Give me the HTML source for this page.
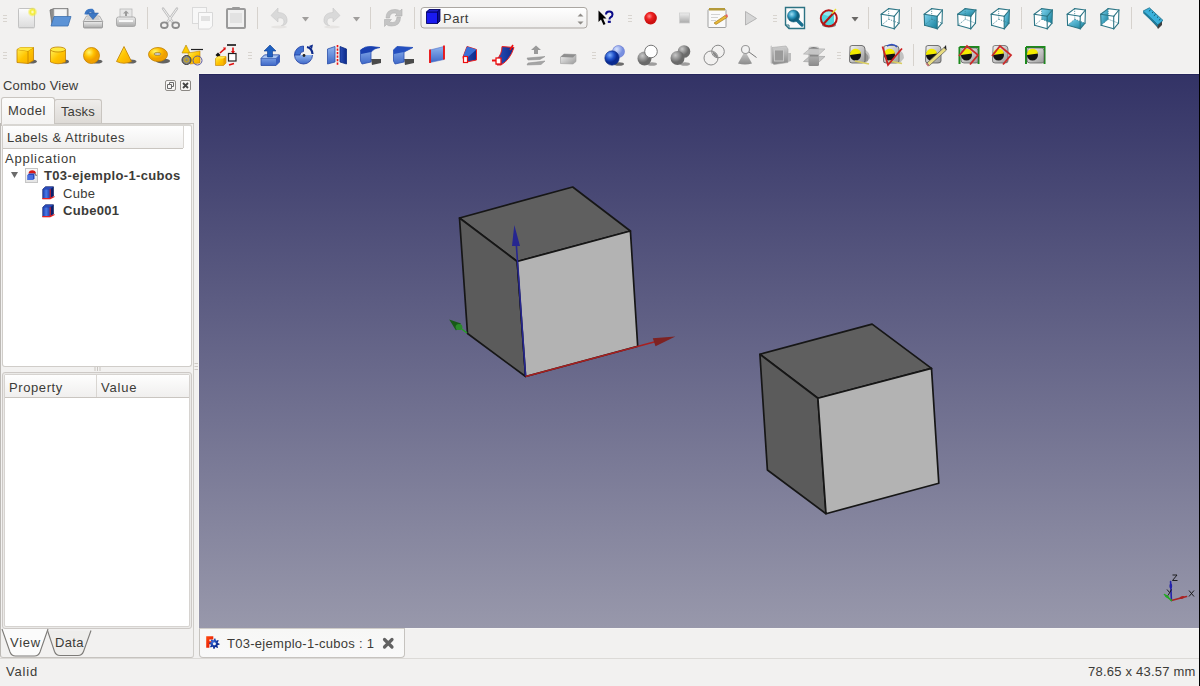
<!DOCTYPE html>
<html><head><meta charset="utf-8">
<style>
html,body{margin:0;padding:0;}
body{width:1200px;height:686px;overflow:hidden;position:relative;background:#f2f1f0;font-family:"Liberation Sans",sans-serif;font-size:13px;color:#3c3c3c;}
.a{position:absolute;}
.t{position:absolute;white-space:pre;line-height:15px;font-size:13px;color:#3c3b37;}
.b{font-weight:bold;}
#view{left:199px;top:74px;width:1000px;height:554px;background:linear-gradient(#333366,#9898ab);border-top:1px solid #26265c;box-sizing:border-box;}
#rb{left:1199px;top:0;width:1px;height:686px;background:#000;}
</style></head><body>


<!-- toolbar row 1 -->
<svg class="a" style="left:0;top:0" width="1200" height="36" viewBox="0 0 1200 36">
<defs>
<linearGradient id="gpage" x1="0" y1="0" x2="0" y2="1"><stop offset="0" stop-color="#fdfdfd"/><stop offset="1" stop-color="#dcdcdc"/></linearGradient>
<radialGradient id="gstar"><stop offset="0" stop-color="#ffffe0"/><stop offset="0.45" stop-color="#f4ec30"/><stop offset="1" stop-color="#f4ec30" stop-opacity="0"/></radialGradient>
<linearGradient id="ggray" x1="0" y1="0" x2="0" y2="1"><stop offset="0" stop-color="#eeeeee"/><stop offset="1" stop-color="#a9a9a9"/></linearGradient>
<radialGradient id="gred" cx="0.4" cy="0.35"><stop offset="0" stop-color="#ff8a8a"/><stop offset="0.5" stop-color="#ee2222"/><stop offset="1" stop-color="#cc1010"/></radialGradient>
<linearGradient id="gteal" x1="0" y1="0" x2="1" y2="1"><stop offset="0" stop-color="#7fd4f0"/><stop offset="1" stop-color="#137d98"/></linearGradient>
<radialGradient id="gmag" cx="0.35" cy="0.35"><stop offset="0" stop-color="#9fe0f5"/><stop offset="0.6" stop-color="#2b95bd"/><stop offset="1" stop-color="#10607f"/></radialGradient>
<linearGradient id="gcombo" x1="0" y1="0" x2="0" y2="1"><stop offset="0" stop-color="#ffffff"/><stop offset="1" stop-color="#efeeed"/></linearGradient>
</defs>
<g fill="none" stroke="#d8d4cf" stroke-width="1">
 <path d="M3,15.5H7M3,18.5H7M3,21.5H7"/>
 <path d="M3,52.5H7M3,55.5H7M3,58.5H7"/>
 <path d="M628,15.5H632M628,18.5H632M628,21.5H632"/>
 <path d="M773,15.5H777M773,18.5H777M773,21.5H777"/>
</g>
<g stroke="#d6d2cd" stroke-width="1">
 <path d="M147.5,7V29M257.5,7V29M370.5,7V29M414.5,7V29M868.5,7V29M911.5,7V29M1021.5,7V29M1131.5,7V29"/>
</g>
<!-- new -->
<rect x="18.5" y="9" width="16" height="19.5" rx="0.8" fill="#b8b8b8" opacity="0.6"/>
<rect x="18.5" y="8.5" width="16" height="19" rx="0.8" fill="url(#gpage)" stroke="#c2c2c2"/>
<circle cx="32.5" cy="12" r="5" fill="url(#gstar)"/>
<!-- open -->
<path d="M50,10 L54,8.5 L68,8.5 L68,16 L52,25 Z" fill="#8d8d8d" stroke="#6f6f6f" stroke-width="0.8"/>
<rect x="54" y="9" width="13" height="9" fill="#f4f4f4" stroke="#b8b8b8" stroke-width="0.6"/>
<path d="M54,16.5 L71,16.5 L68,26 L51,26 Z" fill="#5c93d6" stroke="#3a6eb0" stroke-width="0.8"/>
<!-- save -->
<path d="M86.5,16 L99.5,16 L103,22 L83,22 Z" fill="#e4e4e4" stroke="#a0a0a0" stroke-width="0.8"/>
<path d="M88,16 L98,16 L100,20 L86,20Z" fill="#cfcfcf"/>
<rect x="83.5" y="21.5" width="19" height="6.5" rx="1" fill="url(#ggray)" stroke="#8e8e8e" stroke-width="0.8"/>
<path d="M86,14.5 Q87,10 92,10.5 Q93,11 93,13" fill="none" stroke="#3c77c4" stroke-width="3.4"/>
<path d="M87.5,13 L98.5,13 L93,19.5Z" fill="#3c77c4" stroke="#2a5a9a" stroke-width="0.5"/>
<!-- print -->
<rect x="120" y="9" width="12" height="9" fill="#e6e6e6" stroke="#b8b8b8" stroke-width="0.8"/>
<path d="M126,10.5 L129,13.5 L127,13.5 L127,16 L125,16 L125,13.5 L123,13.5Z" fill="#9a9a9a"/>
<rect x="116.5" y="17" width="19" height="9.5" rx="2" fill="url(#ggray)" stroke="#a0a0a0" stroke-width="0.8"/>
<rect x="119" y="20" width="14" height="2" fill="#f8f8f8"/>
<!-- cut -->
<path d="M163,8.5 L172.5,22 M177,8.5 L167.5,22" stroke="#bdbdbd" stroke-width="2.4" stroke-linecap="round"/>
<path d="M163,8.5 L172.5,22 M177,8.5 L167.5,22" stroke="#f0f0f0" stroke-width="1"/>
<ellipse cx="164.3" cy="25.2" rx="3.4" ry="2.8" fill="none" stroke="#8c8c8c" stroke-width="1.8"/>
<ellipse cx="175.7" cy="25.2" rx="3.4" ry="2.8" fill="none" stroke="#8c8c8c" stroke-width="1.8"/>
<!-- copy -->
<rect x="192.5" y="7.5" width="14" height="16" fill="#f7f7f7" stroke="#dadada"/>
<path d="M198.5,12.5 H212.5 V26 L209.5,29 H198.5 Z" fill="#f9f9f9" stroke="#d8d8d8"/>
<rect x="201" y="16" width="9" height="5" fill="#e2e2e2"/>
<!-- paste -->
<rect x="227" y="9" width="18" height="19" rx="1" fill="#f0f0f0" stroke="#9a9a9a" stroke-width="2"/>
<rect x="232" y="7" width="8" height="3" rx="1" fill="#9a9a9a"/>
<rect x="230" y="13" width="12" height="10" fill="#e2e2e2"/>
<!-- undo -->
<path d="M278,8 L271,15.5 L278,22 L278,18 Q284,17 284,22 Q284,25 281,26 Q288,25 287,19 Q286,12.5 278,12.5Z" fill="#d9d9d9" stroke="#c8c8c8" stroke-width="0.6"/>
<ellipse cx="279" cy="27" rx="8" ry="1.5" fill="#e6e4e2"/>
<path d="M302,17 L309,17 L305.5,21.5Z" fill="#a09e9c"/>
<!-- redo -->
<path d="M333,8 L340,15.5 L333,22 L333,18 Q327,17 327,22 Q327,25 330,26 Q323,25 324,19 Q325,12.5 333,12.5Z" fill="#d9d9d9" stroke="#c8c8c8" stroke-width="0.6"/>
<ellipse cx="332" cy="27" rx="8" ry="1.5" fill="#e6e4e2"/>
<path d="M353,17 L360,17 L356.5,21.5Z" fill="#a09e9c"/>
<!-- refresh -->
<path d="M386,18 Q386,9.5 395,9.5 Q398.5,9.5 400,11 L402,9 L402,16 L395,16 L397,14 Q396,13 394,13 Q390,13 389.5,18Z" fill="#c4c4c4" stroke="#b0b0b0" stroke-width="0.6"/>
<path d="M400.5,17 Q400.5,26 391.5,26 Q388,26 386.5,24.5 L384.5,26.5 L384.5,19.5 L391.5,19.5 L389.5,21.5 Q390.5,22.5 392.5,22.5 Q396.5,22.5 397,17Z" fill="#c4c4c4" stroke="#b0b0b0" stroke-width="0.6"/>
<!-- combo box -->
<rect x="421" y="7.5" width="166" height="20.5" rx="3" fill="url(#gcombo)" stroke="#aba7a2" stroke-width="1"/>
<path d="M426.5,12 L429,9.5 L440,9.5 L440,21 L437.5,23.5 L426.5,23.5Z" fill="#0a0a8a"/>
<path d="M426.5,12 L437.5,12 L437.5,23.5 L426.5,23.5Z" fill="#1a1af0" stroke="#000060" stroke-width="0.8"/>
<path d="M426.5,12 L429,9.5 L440,9.5 L437.5,12Z" fill="#2020c8" stroke="#000060" stroke-width="0.8"/>
<path d="M437.5,12 L440,9.5 L440,21 L437.5,23.5Z" fill="#101090" stroke="#000060" stroke-width="0.8"/>
<path d="M577.5,16.5 L580.5,13.5 L583.5,16.5Z M577.5,21.5 L583.5,21.5 L580.5,24.5Z" fill="#8e8b87"/>
<!-- whats this -->
<path d="M598.5,10.5 L598.5,22 L601,19.5 L603.5,25 L605.5,24 L603,18.5 L606.5,18.5Z" fill="#000"/>
<path d="M606,14.5 Q606,11.5 609.3,11.5 Q612.5,11.5 612.5,14.5 Q612.5,16.5 610.3,17.5 Q609.5,18 609.5,19.5" fill="none" stroke="#0a0a88" stroke-width="2"/><rect x="607.8" y="20.7" width="3" height="2.2" fill="#0a0a88"/>
<!-- record -->
<circle cx="650.6" cy="18.1" r="6.3" fill="url(#gred)"/>
<!-- stop -->
<rect x="679.5" y="13" width="10" height="10" fill="url(#ggray)" stroke="#cfcfcf" stroke-width="0.8"/>
<!-- macro editor -->
<rect x="708" y="9.5" width="18" height="18" rx="1" fill="#fafafa" stroke="#a0a0a0" stroke-width="1"/>
<rect x="709" y="8" width="16" height="2.5" fill="#b49a3a"/>
<path d="M711,14.5H720M711,17.5H718M711,20.5H716" stroke="#c8c8c8" stroke-width="0.8"/>
<path d="M714,23 L725,15.5 L727,17.5 L716,24.5 Z" fill="#e8b838" stroke="#9a7010" stroke-width="0.6"/>
<path d="M725,15.5 L727,14 L728,16.5 L727,17.5Z" fill="#e86060"/>
<!-- play -->
<path d="M745.5,11.5 L756.5,18.5 L745.5,25 Z" fill="#d6d6d6" stroke="#a8a8a8" stroke-width="0.8"/>
<!-- zoom fit -->
<path d="M785.5,7.5 H804.5 V28.5 H789 L785.5,25 Z" fill="#fbfbfb" stroke="#2c7383" stroke-width="1.4"/>
<path d="M785.5,25 L789,25 L789,28.5" fill="none" stroke="#2c7383" stroke-width="1"/>
<path d="M797,20 L802,25" stroke="#1a6f8f" stroke-width="3.2" stroke-linecap="round"/>
<circle cx="793.5" cy="16" r="6" fill="url(#gmag)" stroke="#145f7a" stroke-width="0.6"/>
<!-- draw style -->
<ellipse cx="829" cy="25" rx="7" ry="2.5" fill="#333" opacity="0.6"/>
<path d="M822,14 L828,11 L834,13 L834,24 L828,27 L822,24Z" fill="#50d4dc"/>
<path d="M822,14 L828,11 L834,13 L828,16Z" fill="#8ee8ee"/>
<circle cx="828.8" cy="18.3" r="8" fill="none" stroke="#b31515" stroke-width="2"/>
<path d="M823.5,24 L834,12.5" stroke="#b31515" stroke-width="2"/>
<path d="M832,13.5 L836,9" stroke="#e8e030" stroke-width="1.4"/>
<path d="M851.5,17 L858.5,17 L855,21.5Z" fill="#6a6866"/>
</svg>

<svg class="a" style="left:0;top:0" width="1200" height="36" viewBox="0 0 1200 36">
<defs><linearGradient id="gteal2" x1="0" y1="0" x2="1" y2="1"><stop offset="0" stop-color="#7fd4f0"/><stop offset="1" stop-color="#137d98"/></linearGradient></defs>
<polygon points="881.2,14.2 888.6,8.6 899.4,10.0 899.0,23.2 894.2,28.8 881.6,25.2" fill="#ffffff"/>
<line x1="888.6" y1="8.6" x2="888.8" y2="19.2" stroke="#3d8393" stroke-width="0.8" stroke-dasharray="1.2,1"/>
<line x1="888.8" y1="19.2" x2="881.6" y2="25.2" stroke="#3d8393" stroke-width="0.8" stroke-dasharray="1.2,1"/>
<line x1="888.8" y1="19.2" x2="899.0" y2="23.2" stroke="#3d8393" stroke-width="0.8" stroke-dasharray="1.2,1"/>
<line x1="881.2" y1="14.2" x2="888.6" y2="8.6" stroke="#2d7686" stroke-width="1.1" stroke-linecap="round"/>
<line x1="888.6" y1="8.6" x2="899.4" y2="10.0" stroke="#2d7686" stroke-width="1.1" stroke-linecap="round"/>
<line x1="899.4" y1="10.0" x2="894.2" y2="16.3" stroke="#2d7686" stroke-width="1.1" stroke-linecap="round"/>
<line x1="894.2" y1="16.3" x2="881.2" y2="14.2" stroke="#2d7686" stroke-width="1.1" stroke-linecap="round"/>
<line x1="881.2" y1="14.2" x2="881.6" y2="25.2" stroke="#2d7686" stroke-width="1.1" stroke-linecap="round"/>
<line x1="881.6" y1="25.2" x2="894.2" y2="28.8" stroke="#2d7686" stroke-width="1.1" stroke-linecap="round"/>
<line x1="894.2" y1="28.8" x2="894.2" y2="16.3" stroke="#2d7686" stroke-width="1.1" stroke-linecap="round"/>
<line x1="899.4" y1="10.0" x2="899.0" y2="23.2" stroke="#2d7686" stroke-width="1.1" stroke-linecap="round"/>
<line x1="899.0" y1="23.2" x2="894.2" y2="28.8" stroke="#2d7686" stroke-width="1.1" stroke-linecap="round"/>
<polygon points="924.2,14.2 931.6,8.6 942.4,10.0 942.0,23.2 937.2,28.8 924.6,25.2" fill="#ffffff"/>
<polygon points="924.2,14.2 937.2,16.3 937.2,28.8 924.6,25.2" fill="url(#gteal2)"/>
<line x1="931.6" y1="8.6" x2="931.8" y2="19.2" stroke="#3d8393" stroke-width="0.8" stroke-dasharray="1.2,1"/>
<line x1="931.8" y1="19.2" x2="924.6" y2="25.2" stroke="#3d8393" stroke-width="0.8" stroke-dasharray="1.2,1"/>
<line x1="931.8" y1="19.2" x2="942.0" y2="23.2" stroke="#3d8393" stroke-width="0.8" stroke-dasharray="1.2,1"/>
<line x1="924.2" y1="14.2" x2="931.6" y2="8.6" stroke="#2d7686" stroke-width="1.1" stroke-linecap="round"/>
<line x1="931.6" y1="8.6" x2="942.4" y2="10.0" stroke="#2d7686" stroke-width="1.1" stroke-linecap="round"/>
<line x1="942.4" y1="10.0" x2="937.2" y2="16.3" stroke="#2d7686" stroke-width="1.1" stroke-linecap="round"/>
<line x1="937.2" y1="16.3" x2="924.2" y2="14.2" stroke="#2d7686" stroke-width="1.1" stroke-linecap="round"/>
<line x1="924.2" y1="14.2" x2="924.6" y2="25.2" stroke="#2d7686" stroke-width="1.1" stroke-linecap="round"/>
<line x1="924.6" y1="25.2" x2="937.2" y2="28.8" stroke="#2d7686" stroke-width="1.1" stroke-linecap="round"/>
<line x1="937.2" y1="28.8" x2="937.2" y2="16.3" stroke="#2d7686" stroke-width="1.1" stroke-linecap="round"/>
<line x1="942.4" y1="10.0" x2="942.0" y2="23.2" stroke="#2d7686" stroke-width="1.1" stroke-linecap="round"/>
<line x1="942.0" y1="23.2" x2="937.2" y2="28.8" stroke="#2d7686" stroke-width="1.1" stroke-linecap="round"/>
<polygon points="957.7,14.2 965.1,8.6 975.9,10.0 975.5,23.2 970.7,28.8 958.1,25.2" fill="#ffffff"/>
<polygon points="957.7,14.2 965.1,8.6 975.9,10.0 970.7,16.3" fill="url(#gteal2)"/>
<line x1="965.1" y1="8.6" x2="965.3" y2="19.2" stroke="#3d8393" stroke-width="0.8" stroke-dasharray="1.2,1"/>
<line x1="965.3" y1="19.2" x2="958.1" y2="25.2" stroke="#3d8393" stroke-width="0.8" stroke-dasharray="1.2,1"/>
<line x1="965.3" y1="19.2" x2="975.5" y2="23.2" stroke="#3d8393" stroke-width="0.8" stroke-dasharray="1.2,1"/>
<line x1="957.7" y1="14.2" x2="965.1" y2="8.6" stroke="#2d7686" stroke-width="1.1" stroke-linecap="round"/>
<line x1="965.1" y1="8.6" x2="975.9" y2="10.0" stroke="#2d7686" stroke-width="1.1" stroke-linecap="round"/>
<line x1="975.9" y1="10.0" x2="970.7" y2="16.3" stroke="#2d7686" stroke-width="1.1" stroke-linecap="round"/>
<line x1="970.7" y1="16.3" x2="957.7" y2="14.2" stroke="#2d7686" stroke-width="1.1" stroke-linecap="round"/>
<line x1="957.7" y1="14.2" x2="958.1" y2="25.2" stroke="#2d7686" stroke-width="1.1" stroke-linecap="round"/>
<line x1="958.1" y1="25.2" x2="970.7" y2="28.8" stroke="#2d7686" stroke-width="1.1" stroke-linecap="round"/>
<line x1="970.7" y1="28.8" x2="970.7" y2="16.3" stroke="#2d7686" stroke-width="1.1" stroke-linecap="round"/>
<line x1="975.9" y1="10.0" x2="975.5" y2="23.2" stroke="#2d7686" stroke-width="1.1" stroke-linecap="round"/>
<line x1="975.5" y1="23.2" x2="970.7" y2="28.8" stroke="#2d7686" stroke-width="1.1" stroke-linecap="round"/>
<polygon points="991.2,14.2 998.6,8.6 1009.4,10.0 1009.0,23.2 1004.2,28.8 991.6,25.2" fill="#ffffff"/>
<polygon points="1004.2,16.3 1009.4,10.0 1009.0,23.2 1004.2,28.8" fill="url(#gteal2)"/>
<line x1="998.6" y1="8.6" x2="998.8" y2="19.2" stroke="#3d8393" stroke-width="0.8" stroke-dasharray="1.2,1"/>
<line x1="998.8" y1="19.2" x2="991.6" y2="25.2" stroke="#3d8393" stroke-width="0.8" stroke-dasharray="1.2,1"/>
<line x1="998.8" y1="19.2" x2="1009.0" y2="23.2" stroke="#3d8393" stroke-width="0.8" stroke-dasharray="1.2,1"/>
<line x1="991.2" y1="14.2" x2="998.6" y2="8.6" stroke="#2d7686" stroke-width="1.1" stroke-linecap="round"/>
<line x1="998.6" y1="8.6" x2="1009.4" y2="10.0" stroke="#2d7686" stroke-width="1.1" stroke-linecap="round"/>
<line x1="1009.4" y1="10.0" x2="1004.2" y2="16.3" stroke="#2d7686" stroke-width="1.1" stroke-linecap="round"/>
<line x1="1004.2" y1="16.3" x2="991.2" y2="14.2" stroke="#2d7686" stroke-width="1.1" stroke-linecap="round"/>
<line x1="991.2" y1="14.2" x2="991.6" y2="25.2" stroke="#2d7686" stroke-width="1.1" stroke-linecap="round"/>
<line x1="991.6" y1="25.2" x2="1004.2" y2="28.8" stroke="#2d7686" stroke-width="1.1" stroke-linecap="round"/>
<line x1="1004.2" y1="28.8" x2="1004.2" y2="16.3" stroke="#2d7686" stroke-width="1.1" stroke-linecap="round"/>
<line x1="1009.4" y1="10.0" x2="1009.0" y2="23.2" stroke="#2d7686" stroke-width="1.1" stroke-linecap="round"/>
<line x1="1009.0" y1="23.2" x2="1004.2" y2="28.8" stroke="#2d7686" stroke-width="1.1" stroke-linecap="round"/>
<polygon points="1034.2,14.2 1041.6,8.6 1052.4,10.0 1052.0,23.2 1047.2,28.8 1034.6,25.2" fill="#ffffff"/>
<polygon points="1041.6,8.6 1052.4,10.0 1052.0,23.2 1041.8,19.2" fill="url(#gteal2)"/>
<line x1="1041.6" y1="8.6" x2="1041.8" y2="19.2" stroke="#3d8393" stroke-width="0.8" stroke-dasharray="1.2,1"/>
<line x1="1041.8" y1="19.2" x2="1034.6" y2="25.2" stroke="#3d8393" stroke-width="0.8" stroke-dasharray="1.2,1"/>
<line x1="1041.8" y1="19.2" x2="1052.0" y2="23.2" stroke="#3d8393" stroke-width="0.8" stroke-dasharray="1.2,1"/>
<line x1="1034.2" y1="14.2" x2="1041.6" y2="8.6" stroke="#2d7686" stroke-width="1.1" stroke-linecap="round"/>
<line x1="1041.6" y1="8.6" x2="1052.4" y2="10.0" stroke="#2d7686" stroke-width="1.1" stroke-linecap="round"/>
<line x1="1052.4" y1="10.0" x2="1047.2" y2="16.3" stroke="#2d7686" stroke-width="1.1" stroke-linecap="round"/>
<line x1="1047.2" y1="16.3" x2="1034.2" y2="14.2" stroke="#2d7686" stroke-width="1.1" stroke-linecap="round"/>
<line x1="1034.2" y1="14.2" x2="1034.6" y2="25.2" stroke="#2d7686" stroke-width="1.1" stroke-linecap="round"/>
<line x1="1034.6" y1="25.2" x2="1047.2" y2="28.8" stroke="#2d7686" stroke-width="1.1" stroke-linecap="round"/>
<line x1="1047.2" y1="28.8" x2="1047.2" y2="16.3" stroke="#2d7686" stroke-width="1.1" stroke-linecap="round"/>
<line x1="1052.4" y1="10.0" x2="1052.0" y2="23.2" stroke="#2d7686" stroke-width="1.1" stroke-linecap="round"/>
<line x1="1052.0" y1="23.2" x2="1047.2" y2="28.8" stroke="#2d7686" stroke-width="1.1" stroke-linecap="round"/>
<polygon points="1067.2,14.2 1074.6,8.6 1085.4,10.0 1085.0,23.2 1080.2,28.8 1067.6,25.2" fill="#ffffff"/>
<polygon points="1067.6,25.2 1080.2,28.8 1085.0,23.2 1074.8,19.2" fill="url(#gteal2)"/>
<line x1="1074.6" y1="8.6" x2="1074.8" y2="19.2" stroke="#3d8393" stroke-width="0.8" stroke-dasharray="1.2,1"/>
<line x1="1074.8" y1="19.2" x2="1067.6" y2="25.2" stroke="#3d8393" stroke-width="0.8" stroke-dasharray="1.2,1"/>
<line x1="1074.8" y1="19.2" x2="1085.0" y2="23.2" stroke="#3d8393" stroke-width="0.8" stroke-dasharray="1.2,1"/>
<line x1="1067.2" y1="14.2" x2="1074.6" y2="8.6" stroke="#2d7686" stroke-width="1.1" stroke-linecap="round"/>
<line x1="1074.6" y1="8.6" x2="1085.4" y2="10.0" stroke="#2d7686" stroke-width="1.1" stroke-linecap="round"/>
<line x1="1085.4" y1="10.0" x2="1080.2" y2="16.3" stroke="#2d7686" stroke-width="1.1" stroke-linecap="round"/>
<line x1="1080.2" y1="16.3" x2="1067.2" y2="14.2" stroke="#2d7686" stroke-width="1.1" stroke-linecap="round"/>
<line x1="1067.2" y1="14.2" x2="1067.6" y2="25.2" stroke="#2d7686" stroke-width="1.1" stroke-linecap="round"/>
<line x1="1067.6" y1="25.2" x2="1080.2" y2="28.8" stroke="#2d7686" stroke-width="1.1" stroke-linecap="round"/>
<line x1="1080.2" y1="28.8" x2="1080.2" y2="16.3" stroke="#2d7686" stroke-width="1.1" stroke-linecap="round"/>
<line x1="1085.4" y1="10.0" x2="1085.0" y2="23.2" stroke="#2d7686" stroke-width="1.1" stroke-linecap="round"/>
<line x1="1085.0" y1="23.2" x2="1080.2" y2="28.8" stroke="#2d7686" stroke-width="1.1" stroke-linecap="round"/>
<polygon points="1100.7,14.2 1108.1,8.6 1118.9,10.0 1118.5,23.2 1113.7,28.8 1101.1,25.2" fill="#ffffff"/>
<polygon points="1100.7,14.2 1108.1,8.6 1108.3,19.2 1101.1,25.2" fill="url(#gteal2)"/>
<line x1="1108.1" y1="8.6" x2="1108.3" y2="19.2" stroke="#3d8393" stroke-width="0.8" stroke-dasharray="1.2,1"/>
<line x1="1108.3" y1="19.2" x2="1101.1" y2="25.2" stroke="#3d8393" stroke-width="0.8" stroke-dasharray="1.2,1"/>
<line x1="1108.3" y1="19.2" x2="1118.5" y2="23.2" stroke="#3d8393" stroke-width="0.8" stroke-dasharray="1.2,1"/>
<line x1="1100.7" y1="14.2" x2="1108.1" y2="8.6" stroke="#2d7686" stroke-width="1.1" stroke-linecap="round"/>
<line x1="1108.1" y1="8.6" x2="1118.9" y2="10.0" stroke="#2d7686" stroke-width="1.1" stroke-linecap="round"/>
<line x1="1118.9" y1="10.0" x2="1113.7" y2="16.3" stroke="#2d7686" stroke-width="1.1" stroke-linecap="round"/>
<line x1="1113.7" y1="16.3" x2="1100.7" y2="14.2" stroke="#2d7686" stroke-width="1.1" stroke-linecap="round"/>
<line x1="1100.7" y1="14.2" x2="1101.1" y2="25.2" stroke="#2d7686" stroke-width="1.1" stroke-linecap="round"/>
<line x1="1101.1" y1="25.2" x2="1113.7" y2="28.8" stroke="#2d7686" stroke-width="1.1" stroke-linecap="round"/>
<line x1="1113.7" y1="28.8" x2="1113.7" y2="16.3" stroke="#2d7686" stroke-width="1.1" stroke-linecap="round"/>
<line x1="1118.9" y1="10.0" x2="1118.5" y2="23.2" stroke="#2d7686" stroke-width="1.1" stroke-linecap="round"/>
<line x1="1118.5" y1="23.2" x2="1113.7" y2="28.8" stroke="#2d7686" stroke-width="1.1" stroke-linecap="round"/>
<path d="M1143.5,12 L1157,27 L1158,29 L1162,25 L1162,21 Z" fill="#2e2e2e" opacity="0.9"/>
<path d="M1143.2,11 L1149.4,7.8 L1163,20.4 L1157.8,24.8 Z" fill="#3ab0da" stroke="#1d6f8a" stroke-width="0.8"/>
<path d="M1143.2,11 L1157.8,24.8 L1157.8,27 L1143.2,13.2Z" fill="#1f7f9f"/>
<path d="M1150.5,10 l-1.6,1.2 M1153,12.2 l-1,0.8 M1155.5,14.5 l-1.6,1.2 M1158,16.8 l-1,0.8 M1160.5,19 l-1.6,1.2" stroke="#0d4a5e" stroke-width="0.9"/>
</svg>
<!-- toolbar row 2 -->
<svg class="a" style="left:0;top:36px" width="1200" height="38" viewBox="0 36 1200 38">
<defs>
<linearGradient id="gy" x1="0" y1="0" x2="1" y2="1"><stop offset="0" stop-color="#fff25a"/><stop offset="0.5" stop-color="#ffc400"/><stop offset="1" stop-color="#f5a800"/></linearGradient>
<radialGradient id="gys" cx="0.35" cy="0.3"><stop offset="0" stop-color="#fff870"/><stop offset="0.6" stop-color="#ffc000"/><stop offset="1" stop-color="#f0a000"/></radialGradient>
<linearGradient id="gb" x1="0" y1="0" x2="0" y2="1"><stop offset="0" stop-color="#8fb4ee"/><stop offset="1" stop-color="#3f68c8"/></linearGradient>
<linearGradient id="gbd" x1="0" y1="0" x2="1" y2="0"><stop offset="0" stop-color="#2a4fb8"/><stop offset="1" stop-color="#0d2a8a"/></linearGradient>
<radialGradient id="gbs" cx="0.35" cy="0.3"><stop offset="0" stop-color="#7fb0ff"/><stop offset="0.6" stop-color="#1f50c8"/><stop offset="1" stop-color="#0a2a90"/></radialGradient>
<radialGradient id="gbs2" cx="0.35" cy="0.3"><stop offset="0" stop-color="#d8e4ff"/><stop offset="1" stop-color="#7890e0"/></radialGradient>
<radialGradient id="ggs" cx="0.35" cy="0.3"><stop offset="0" stop-color="#c8c8c8"/><stop offset="1" stop-color="#6a6a6a"/></radialGradient>
<linearGradient id="gg" x1="0" y1="0" x2="0" y2="1"><stop offset="0" stop-color="#cfcfcf"/><stop offset="1" stop-color="#8a8a8a"/></linearGradient>
<linearGradient id="gsilver" x1="0" y1="0" x2="1" y2="1"><stop offset="0" stop-color="#f4f4f4"/><stop offset="1" stop-color="#9a9a9a"/></linearGradient>
</defs>
<g fill="none" stroke="#d8d4cf" stroke-width="1">
 <path d="M3,52.5H7M3,55.5H7M3,58.5H7"/>
 <path d="M248,52.5H252M248,55.5H252M248,58.5H252"/>
 <path d="M592,52.5H596M592,55.5H596M592,58.5H596"/>
 <path d="M837,52.5H841M837,55.5H841M837,58.5H841"/>
</g>
<path d="M913.5,44V66" stroke="#d6d2cd"/>
<!-- box -->
<ellipse cx="31" cy="61.5" rx="6" ry="2" fill="#333" opacity="0.75"/>
<path d="M17,49.5 L20.5,47.5 L33.5,47.5 L33.5,60.5 L28,63.5 L17,62.5 Z" fill="url(#gy)" stroke="#c08000" stroke-width="0.8"/>
<path d="M17,49.5 L28,51 L28,63.5 M28,51 L33.5,47.5" fill="none" stroke="#c08000" stroke-width="0.8"/>
<path d="M17,49.5 L20.5,47.5 L33.5,47.5 L28,51Z" fill="#ffe840"/>
<!-- cylinder -->
<ellipse cx="64" cy="61.5" rx="5" ry="2" fill="#333" opacity="0.75"/>
<path d="M50.5,49.5 L50.5,62 Q58,65.5 65.5,62 L65.5,49.5" fill="url(#gy)" stroke="#c08000" stroke-width="0.8"/>
<ellipse cx="58" cy="49.5" rx="7.5" ry="2.5" fill="#ffea40" stroke="#c08000" stroke-width="0.8"/>
<!-- sphere -->
<ellipse cx="97" cy="61.5" rx="5.5" ry="2" fill="#333" opacity="0.75"/>
<circle cx="91.5" cy="55.5" r="8" fill="url(#gys)" stroke="#c08000" stroke-width="0.8"/>
<!-- cone -->
<ellipse cx="131" cy="61.5" rx="5.5" ry="2" fill="#333" opacity="0.75"/>
<path d="M124,46.5 L131.5,61.5 Q124,65 116.5,61.5Z" fill="url(#gy)" stroke="#c08000" stroke-width="0.8"/>
<!-- torus -->
<ellipse cx="163" cy="61" rx="7" ry="2.5" fill="#333" opacity="0.75"/>
<ellipse cx="158" cy="54.5" rx="9.5" ry="7" fill="url(#gys)" stroke="#c08000" stroke-width="0.8"/>
<ellipse cx="157.5" cy="54" rx="3.5" ry="1.5" fill="#c8c8c8" stroke="#9a7000" stroke-width="0.6"/>
<!-- primitives -->
<path d="M186,45 L190,53 L182,53Z" fill="#ffcc00" stroke="#b08000" stroke-width="0.6"/>
<path d="M191,49.5 H203" stroke="#222" stroke-width="1.2"/>
<path d="M188,53 L200,51 L200,63 L190,64 Z" fill="url(#gy)" stroke="#c08000" stroke-width="0.6"/>
<circle cx="186.5" cy="60" r="4.5" fill="#888" stroke="#333" stroke-width="1"/>
<circle cx="186.5" cy="60" r="2" fill="none" stroke="#d8b000" stroke-width="1"/>
<circle cx="197.5" cy="60.5" r="4.5" fill="none" stroke="#5a5aa0" stroke-width="1"/>
<!-- shape builder -->
<path d="M215.5,55 L218,52.5 L220.5,55 L218,57.5Z" fill="#111"/>
<path d="M220,53 L225,48.5" stroke="#e01010" stroke-width="1.6"/><path d="M223,47.5 L226,47.5 L225,50.5Z" fill="#e01010"/>
<path d="M227,45 H236" stroke="#111" stroke-width="1.6"/>
<path d="M233,47.5 V52" stroke="#e01010" stroke-width="1.6"/><path d="M231,51 L235,51 L233,54Z" fill="#e01010"/>
<rect x="228.5" y="53.5" width="7.5" height="7.5" fill="#fff" stroke="#222" stroke-width="1.2"/>
<path d="M234,63.5 L229,65" stroke="#e01010" stroke-width="1.6"/>
<path d="M215.5,58.5 L218,56.5 L226,56.5 L226,63 L223.5,65.5 L215.5,65.5Z" fill="url(#gy)" stroke="#c08000" stroke-width="0.6"/><path d="M215.5,58.5 L218,56.5 L226,56.5 L223.5,58.5Z" fill="#ffe850"/><path d="M223.5,58.5 L226,56.5 L226,63 L223.5,65.5Z" fill="#e8a000"/>
<!-- extrude -->
<path d="M261,58.5 L264.5,55 L279.5,55 L279.5,62 L276,65.5 L261,65.5Z" fill="url(#gb)" stroke="#2a4fa8" stroke-width="0.8"/>
<path d="M261,58.5 L264.5,55 L279.5,55 L276,58.5Z" fill="#a8c4f0" stroke="#2a4fa8" stroke-width="0.6"/>
<path d="M276,58.5 L279.5,55 L279.5,62 L276,65.5Z" fill="#3a60c0"/>
<path d="M270,45 L276,51 L272.5,51 L272.5,57 L267.5,57 L267.5,51 L264,51Z" fill="#1f60c0" stroke="#0a3a90" stroke-width="0.6"/>
<!-- revolve -->
<path d="M303.5,55 m-9,0 a9,9 0 1,0 18,0" fill="url(#gb)" stroke="#1a3aa0" stroke-width="0.8"/>
<path d="M303.5,46 A9,9 0 0,0 294.5,55 L300,55 A3.5,3.5 0 0,1 303.5,51.5Z" fill="#3f6fd0" stroke="#1a3aa0" stroke-width="0.8"/>
<circle cx="304" cy="55.5" r="1.4" fill="#222"/>
<path d="M307,47 Q312,48 312.5,54" fill="none" stroke="#0d2a8a" stroke-width="2.2"/>
<path d="M309,46 L313,44.5 L312,49Z" fill="#0d2a8a"/>
<!-- mirror -->
<path d="M327.5,49 L335,46.5 L335,62 L327.5,64Z" fill="url(#gb)" stroke="#2a4fa8" stroke-width="0.8"/>
<path d="M340,46.5 L346.5,49 L346.5,64 L340,62Z" fill="url(#gbd)" stroke="#0a2a80" stroke-width="0.8"/>
<path d="M337.5,45 V66" stroke="#ee1010" stroke-width="1.6" stroke-dasharray="2.2,1.3"/>
<!-- fillet -->
<path d="M371,59 L381,59 L381,63 L372,65Z" fill="#4a4a4a"/>
<path d="M360.5,50 Q365,46 371,46.5 L380,47.5 Q374,48 371,52 L371,62 L362,64 L360.5,61Z" fill="url(#gb)" stroke="#2a4fb0" stroke-width="0.8"/>
<path d="M360.5,50 Q365,46 371,46.5 L380,47.5 Q374,48 371,52 L361,54Z" fill="#1a40b0"/>
<!-- chamfer -->
<path d="M404,59 L414,59 L414,63 L405,65Z" fill="#4a4a4a"/>
<path d="M393.5,50 L397,46.5 L413,47.5 L404,52 L404,62 L395,64 L393.5,61Z" fill="url(#gb)" stroke="#2a4fb0" stroke-width="0.8"/>
<path d="M393.5,50 L397,46.5 L413,47.5 L404,52 L394,54Z" fill="#2550c0"/>
<!-- make face -->
<path d="M430,50 L444,46.5 L444,59.5 L430,62.5Z" fill="url(#gb)" stroke="#5070c8" stroke-width="0.6"/>
<path d="M430,49.5 V63M444,45.5 V59.5" stroke="#ee1010" stroke-width="1.8"/>
<!-- loft -->
<path d="M467,46.5 L476.5,49.5 L476.5,60 L464,62.5 L463,57Z" fill="url(#gbd)" stroke="#ee2020" stroke-width="1"/>
<path d="M467,46.5 L476.5,49.5 L468,57 L463,57Z" fill="#3a70d8"/>
<rect x="463.5" y="56.5" width="4" height="6" fill="#fff" stroke="#ee1010" stroke-width="1.2"/>
<!-- sweep -->
<path d="M502,46.5 L514,47.5 Q510,60 501,65 L497,65 L497,59 Q502,54 502,46.5Z" fill="url(#gbd)" stroke="#ee2020" stroke-width="1"/>
<path d="M513,45 L510,50" stroke="#ee1010" stroke-width="1.6"/>
<rect x="496" y="58" width="5" height="6" fill="#fff" stroke="#ee1010" stroke-width="1.3"/>
<path d="M492,60.5 H496" stroke="#ee1010" stroke-width="2"/>
<!-- extrude gray (offset) -->
<path d="M536,45.5 L541,50 L538,50 L538,54 L534,54 L534,50 L531,50Z" fill="#9a9a9a"/>
<path d="M527,58 L545,56.5 L540,59.5 L528,60Z" fill="#a0a0a0" stroke="#8a8a8a" stroke-width="0.5"/>
<path d="M528,63 L545,61 L541,64.5 L527,65Z" fill="#a5a5a5" stroke="#8a8a8a" stroke-width="0.5"/>
<!-- thickness gray box -->
<path d="M560.5,57 L564,54 L576,54.5 L576,61.5 L573,64 L560.5,63.5Z" fill="url(#gsilver)" stroke="#a0a0a0" stroke-width="0.6"/>
<path d="M560.5,57 L564,54 L576,54.5 L573,57.5Z" fill="#8f8f8f"/>
<!-- union -->
<ellipse cx="619" cy="64" rx="5" ry="1.8" fill="#333" opacity="0.7"/>
<circle cx="618.5" cy="51.5" r="6" fill="url(#gbs2)" stroke="#6070d0" stroke-width="0.6"/>
<circle cx="612" cy="58" r="7.2" fill="url(#gbs)" stroke="#0a2a80" stroke-width="0.6"/>
<!-- cut -->
<ellipse cx="652" cy="64" rx="5" ry="1.8" fill="#666" opacity="0.6"/>
<circle cx="644.5" cy="58.5" r="7" fill="url(#ggs)"/>
<circle cx="651" cy="51.5" r="6.3" fill="#fff" stroke="#777" stroke-width="1"/>
<!-- fuse -->
<ellipse cx="685" cy="64" rx="5" ry="1.8" fill="#666" opacity="0.6"/>
<circle cx="684" cy="51.5" r="6.3" fill="url(#ggs)"/>
<circle cx="677.5" cy="58" r="7" fill="url(#ggs)"/>
<!-- common -->
<circle cx="718" cy="51.5" r="6.3" fill="none" stroke="#8a8a8a" stroke-width="1"/>
<circle cx="711" cy="58" r="7" fill="none" stroke="#8a8a8a" stroke-width="1"/>
<path d="M712.5,51.5 Q717,53 717.5,57.5 Q713,56.5 712.5,51.5Z" fill="#888"/>
<!-- section cone -->
<path d="M745,51 L752,63.5 Q745,65.5 738,63.5Z" fill="url(#gg)"/>
<circle cx="745.5" cy="49.5" r="4" fill="#f2f2f2" stroke="#9a9a9a" stroke-width="1.2"/>
<path d="M749,52 L756.5,57.5" stroke="#777" stroke-width="1"/>
<!-- cross section -->
<path d="M770.5,46 L772,45.5 L772,64.5 L770.5,63Z" fill="#ccc"/>
<path d="M772,47.5 L786,46 L788,49 L788,62.5 L774,64.5 L772,63Z" fill="url(#gg)" stroke="#a8a8a8" stroke-width="0.6"/>
<rect x="774.5" y="50" width="9" height="11" fill="#9a9a9a" stroke="#d0d0d0" stroke-width="0.8"/>
<path d="M788,53 L791,53 L791,61 L788,62Z" fill="#bcbcbc"/>
<!-- compound slices -->
<path d="M803.5,61.5 L810,56 L825,56.5 L818.5,62.5Z" fill="#c4c4c4" stroke="#9a9a9a" stroke-width="0.6"/>
<rect x="808.5" y="46.5" width="10.5" height="19.5" rx="1.5" fill="url(#gg)"/>
<path d="M808.5,49 Q813.5,45 819,49" fill="#7a7a7a"/>
<path d="M803.5,54 L810,48.5 L825,49 L818.5,55Z" fill="#c8c8c8" stroke="#9a9a9a" stroke-width="0.6" opacity="0.85"/>
<rect x="810" y="55" width="8" height="1.5" fill="#888"/>
<!-- measure linear -->
<path d="M864,49 Q870,52 870,58 L866,63 L862,63 L865,49Z" fill="#9a9a9a" opacity="0.55"/>
<path d="M864,52 Q870,55 868,61 L862,63Z" fill="#666" opacity="0.5"/>
<path d="M850,48 Q849,46 852,45.5 L862,45.5 Q865,46 865,49 L865,61 Q865,63 862,63 L852,63 Q849,63 849.5,60Z" fill="url(#gsilver)" stroke="#555" stroke-width="0.8"/>
<circle cx="855.5" cy="55" r="5.5" fill="#111"/>
<path d="M850,55 A5.5,5.5 0 0,1 861,53.5 L850,55Z" fill="#f4ec00"/>
<path d="M855,61 L869,64" stroke="#d8cc60" stroke-width="1.6"/>
<!-- measure angular -->
<path d="M898,49 Q904,52 904,58 L900,63 L896,63 L899,49Z" fill="#9a9a9a" opacity="0.55"/>
<path d="M884,48 Q883,46 886,45.5 L896,45.5 Q899,46 899,49 L899,61 Q899,63 896,63 L886,63 Q883,63 883.5,60Z" fill="url(#gsilver)" stroke="#555" stroke-width="0.8"/>
<circle cx="889.5" cy="55" r="5.5" fill="#111"/>
<path d="M884,55 A5.5,5.5 0 0,1 895,53.5 L884,55Z" fill="#f4ec00"/>
<path d="M889,61 L902,63.5" stroke="#d8cc60" stroke-width="1.6"/>
<path d="M882.5,46.5 L888,65 L902,48.5" fill="none" stroke="#cc2020" stroke-width="1.8"/>
<path d="M887,46 Q893,42.5 897,47" fill="none" stroke="#3050c0" stroke-width="1.6"/>
<!-- measure refresh w/ pencil -->
<path d="M926,48 Q925,46 928,45.5 L938,45.5 Q941,46 941,49 L941,61 Q941,63 938,63 L928,63 Q925,63 925.5,60Z" fill="url(#gsilver)" stroke="#555" stroke-width="0.8"/>
<circle cx="931.5" cy="55" r="5.5" fill="#111"/>
<path d="M926,55 A5.5,5.5 0 0,1 937,53.5 L926,55Z" fill="#f4ec00"/>
<path d="M927,63 L944,47.5 L946.5,50 L929.5,65.5Z" fill="#e8dc80" stroke="#555" stroke-width="0.7"/>
<path d="M944,47.5 L946,45 L946.5,50Z" fill="#222"/>
<path d="M925.5,63.5 L927,63 L929.5,65.5 L928,66.5Z" fill="#c07070"/>
<!-- clear all -->
<path d="M959.5,47 H978.5 V64" fill="none" stroke="#1d8a1d" stroke-width="2"/>
<path d="M959.5,47 V64" stroke="#1d8a1d" stroke-width="2"/>
<path d="M962,48 L976,48 Q978,48.5 978,51 L978,61 Q978,63 976,63 L964,63 Q961,63 961,60Z" fill="url(#gsilver)" stroke="#555" stroke-width="0.7"/>
<circle cx="966.5" cy="55" r="5.5" fill="#111"/>
<path d="M961,55 A5.5,5.5 0 0,1 972,53.5 L961,55Z" fill="#f4ec00"/>
<path d="M959,56 L967,46 L978,55 L970,64.5" fill="none" stroke="#cc2a2a" stroke-width="1.8"/>
<!-- toggle all -->
<path d="M993,48 Q992,46 995,45.5 L1005,45.5 Q1008,46 1008,49 L1008,61 Q1008,63 1005,63 L995,63 Q992,63 992.5,60Z" fill="url(#gsilver)" stroke="#555" stroke-width="0.7"/>
<circle cx="998.5" cy="55" r="5.5" fill="#111"/>
<path d="M993,55 A5.5,5.5 0 0,1 1004,53.5 L993,55Z" fill="#f4ec00"/>
<path d="M992,56 L1000,46 L1011,55 L1003,64.5" fill="none" stroke="#cc2a2a" stroke-width="1.8"/>
<!-- toggle 3D -->
<path d="M1026,47 H1044.5 V64 M1026,47 V64" fill="none" stroke="#1d8a1d" stroke-width="2"/>
<path d="M1028,48 L1042,48 Q1044,48.5 1044,51 L1044,61 Q1044,63 1042,63 L1030,63 Q1027,63 1027,60Z" fill="url(#gsilver)" stroke="#555" stroke-width="0.7"/>
<circle cx="1032.5" cy="55" r="5.5" fill="#111"/>
<path d="M1027,55 A5.5,5.5 0 0,1 1038,53.5 L1027,55Z" fill="#f4ec00"/>
</svg>

<div class="t" style="left:443px;top:11px;letter-spacing:0.5px">Part</div>
<!-- left panel -->
<div class="t" style="left:3px;top:78px;letter-spacing:0.2px">Combo View</div>
<div class="a" style="left:165px;top:80px;width:9px;height:9px;border:1px solid #8f8c88;border-radius:2px;background:#f7f6f5"></div>
<svg class="a" style="left:165px;top:80px" width="11" height="11"><path d="M4.5,2.5H8.5V6.5H4.5Z" fill="none" stroke="#6a6a6a" stroke-width="1"/><path d="M2.5,4.5H6.5V8.5H2.5Z" fill="#f7f6f5" stroke="#6a6a6a" stroke-width="1"/></svg>
<div class="a" style="left:180px;top:80px;width:9px;height:9px;border:1px solid #8a8783;border-radius:2px;background:#f7f6f5"></div>
<svg class="a" style="left:180px;top:80px" width="11" height="11"><path d="M3,3 L8,8 M8,3 L3,8" stroke="#444" stroke-width="1.8"/></svg>
<!-- tabs -->
<div class="a" style="left:54px;top:99px;width:46px;height:25px;border:1px solid #c9c5c0;border-bottom:none;border-radius:3px 3px 0 0;background:linear-gradient(#efedeb,#dcd9d5)"></div>
<div class="a" style="left:1px;top:97px;width:52px;height:28px;border:1px solid #c9c5c0;border-bottom:none;border-radius:3px 3px 0 0;background:linear-gradient(#fbfbfa,#f3f2f1)"></div>
<div class="t" style="left:8px;top:103px;letter-spacing:0.5px">Model</div>
<div class="t" style="left:61px;top:104px;letter-spacing:0.1px">Tasks</div>
<!-- tab pane frame -->
<div class="a" style="left:0px;top:123px;width:194px;height:535px;border:1px solid #c6c3bf;border-left-color:#bcb9b5;border-right-color:#cfcdc9;border-top:none;box-sizing:border-box;border-radius:0 0 3px 3px"></div>
<div class="a" style="left:54px;top:123px;width:140px;height:1px;background:#c8c5c1"></div>
<!-- tree -->
<div class="a" style="left:2px;top:124px;width:190px;height:243px;border:1px solid #d0cdc9;border-top:2px solid #d8d6d2;border-radius:3px;background:#fff;box-sizing:border-box"></div>
<div class="a" style="left:3px;top:126px;width:180px;height:22px;border-bottom:1px solid #c9c5c0;background:linear-gradient(#fefefe,#f0efee)"></div>
<div class="a" style="left:183px;top:126px;width:1px;height:22px;background:#d9d6d2"></div>
<div class="t" style="left:7px;top:130px;letter-spacing:0.5px">Labels &amp; Attributes</div>
<div class="t" style="left:5px;top:151px;letter-spacing:0.75px">Application</div>
<svg class="a" style="left:10px;top:171px" width="10" height="8"><path d="M1,1 L8,1 L4.5,7 Z" fill="#6b6b6b"/></svg>
<div class="a" style="left:25px;top:168px;width:11px;height:13px;border:1px solid #c6c6c6;background:linear-gradient(#fafafa,#e4e4e4)"></div>
<svg class="a" style="left:25px;top:168px" width="13" height="14"><path d="M3.5,5.5 A3.8,3.8 0 0,1 11,5.5 Z" fill="#d81818"/><path d="M9.5,5.5 L11.5,7 L10.5,8" stroke="#333" stroke-width="0.8" fill="none"/><path d="M2.5,7 L4,5.5 L9.5,5.5 L9.5,10.5 L8,12 L2.5,12Z" fill="#2848c0"/><path d="M2.5,7 L8,7 L8,12 L2.5,12Z" fill="#4a70e0"/></svg>
<div class="t b" style="left:44px;top:168px;letter-spacing:0.35px">T03-ejemplo-1-cubos</div>
<svg class="a" style="left:42px;top:186px" width="14" height="14"><defs><linearGradient id="gci186" x1="0" y1="0" x2="1" y2="0"><stop offset="0" stop-color="#1a3aa8"/><stop offset="0.45" stop-color="#4a7ae8"/><stop offset="1" stop-color="#1a3aa8"/></linearGradient></defs><path d="M0.8,3.2 L3.5,0.8 L11.5,0.8 L11.5,10 L8.2,12.6 L0.8,12.6Z" fill="#0a2070" stroke="#0a1850" stroke-width="0.6"/><path d="M0.8,3.2 L8.2,3.2 L8.2,12.6 L0.8,12.6Z" fill="url(#gci186)"/><path d="M0.8,3.2 L3.5,0.8 L11.5,0.8 L8.2,3.2Z" fill="#2a4ab8"/><path d="M8.2,3.2 V12.6" stroke="#e82020" stroke-width="1"/><path d="M0.3,12.6 H8.2 L12.5,10.5" stroke="#e82020" stroke-width="1.1" fill="none"/></svg>
<div class="t" style="left:63px;top:186px;letter-spacing:0.3px">Cube</div>
<svg class="a" style="left:42px;top:204px" width="14" height="14"><defs><linearGradient id="gci204" x1="0" y1="0" x2="1" y2="0"><stop offset="0" stop-color="#1a3aa8"/><stop offset="0.45" stop-color="#4a7ae8"/><stop offset="1" stop-color="#1a3aa8"/></linearGradient></defs><path d="M0.8,3.2 L3.5,0.8 L11.5,0.8 L11.5,10 L8.2,12.6 L0.8,12.6Z" fill="#0a2070" stroke="#0a1850" stroke-width="0.6"/><path d="M0.8,3.2 L8.2,3.2 L8.2,12.6 L0.8,12.6Z" fill="url(#gci204)"/><path d="M0.8,3.2 L3.5,0.8 L11.5,0.8 L8.2,3.2Z" fill="#2a4ab8"/><path d="M8.2,3.2 V12.6" stroke="#e82020" stroke-width="1"/><path d="M0.3,12.6 H8.2 L12.5,10.5" stroke="#e82020" stroke-width="1.1" fill="none"/></svg>
<div class="t b" style="left:63px;top:203px;letter-spacing:0.3px">Cube001</div>
<!-- splitter -->
<svg class="a" style="left:194px;top:361px" width="5" height="10"><path d="M0.5,2.5H4M0.5,5.5H4M0.5,8.5H4" stroke="#cdc9c5"/></svg>
<svg class="a" style="left:94px;top:367px" width="8" height="5"><path d="M1,0V4M3.5,0V4M6,0V4" stroke="#c9c5c0"/></svg>
<!-- property view -->
<div class="a" style="left:2px;top:372px;width:190px;height:257px;border:1px solid #cdc9c6;border-radius:3px;background:#ebeae8;box-sizing:border-box"></div>
<div class="a" style="left:4px;top:374px;width:186px;height:253px;border:1px solid #d6d3d0;border-radius:2px;background:#fff;box-sizing:border-box"></div>
<div class="a" style="left:5px;top:375px;width:184px;height:22px;border-bottom:1px solid #c9c5c0;background:linear-gradient(#fefefe,#f0efee)"></div>
<div class="a" style="left:96px;top:375px;width:1px;height:22px;background:#d9d6d2"></div>
<div class="t" style="left:9px;top:380px;letter-spacing:0.6px">Property</div>
<div class="t" style="left:101px;top:380px;letter-spacing:0.8px">Value</div>
<!-- bottom tabs -->
<svg class="a" style="left:0px;top:627px" width="100" height="32">
  <path d="M91,3.5 L83.5,24.5 Q82,28.5 78,28.5 L60,28.5 Q56,28.5 54.5,24.5 L47.5,3.5" fill="#eeedeb" stroke="#7d7b78" stroke-width="1.1"/>
  <path d="M48,2 L40,25 Q38.5,29 34.5,29 L15.5,29 Q11.5,29 10,25 L2,2" fill="#fbfbfb" stroke="#7d7b78" stroke-width="1.1"/>
</svg>
<div class="t" style="left:10px;top:635px;letter-spacing:0.7px">View</div>
<div class="t" style="left:55px;top:635px;letter-spacing:0.3px">Data</div>

<!-- 3D view -->
<div class="a" style="left:198px;top:73px;width:1001px;height:556px;background:#f6f5f4"></div>
<div class="a" id="view"></div>
<svg class="a" style="left:0;top:0" width="1200" height="686" viewBox="0 0 1200 686">
  <!-- cube 1 -->
  <g stroke="#161616" stroke-width="1.7" stroke-linejoin="round">
    <polygon points="459.5,218 572.7,187 630.4,231 517.2,261.5" fill="#5f5f5f"/>
    <polygon points="459.5,218 517.2,261.5 525.6,376.5 467.5,333.5" fill="#5b5b5b"/>
    <polygon points="517.2,261.5 630.4,231 637.7,346.3 525.6,376.5" fill="#b3b3b3"/>
  </g>
  <!-- axes -->
  <g>
    <line x1="525.6" y1="376" x2="516" y2="240" stroke="#262690" stroke-width="1.6"/>
    <polygon points="514.3,225 512,246 520,246" fill="#262690"/>
    <line x1="525.6" y1="376.5" x2="656" y2="341.5" stroke="#a82020" stroke-width="1.5"/>
    <polygon points="675.4,336.5 652.8,338.3 655.5,346.3" fill="#7e2222"/>
    <line x1="467" y1="333" x2="459" y2="327" stroke="#22a022" stroke-width="1.4"/>
    <polygon points="449.2,319.4 461,323.5 456,330.5" fill="#175a17"/>
    <ellipse cx="459" cy="327" rx="3.4" ry="3.1" fill="#2a8a2a"/>
  </g>
  <!-- cube 2 -->
  <g stroke="#161616" stroke-width="1.7" stroke-linejoin="round">
    <polygon points="759.9,354.3 872.1,324.1 931.5,368.4 817.9,398.2" fill="#5f5f5f"/>
    <polygon points="759.9,354.3 817.9,398.2 826,513.7 767.4,470" fill="#5b5b5b"/>
    <polygon points="817.9,398.2 931.5,368.4 938.8,483.2 826,513.7" fill="#b3b3b3"/>
  </g>
  <!-- axis cross -->
  <g stroke-linecap="round">
    <line x1="1171.4" y1="600.4" x2="1170.6" y2="581.5" stroke="#2222aa" stroke-width="1.6"/>
    <ellipse cx="1170.8" cy="586" rx="1.4" ry="2.6" fill="#2222aa"/>
    <line x1="1171.4" y1="600.4" x2="1186.5" y2="596.5" stroke="#aa2222" stroke-width="1.6"/>
    <ellipse cx="1182" cy="597.5" rx="2.4" ry="1.3" fill="#aa2222" transform="rotate(-15 1182 597.5)"/>
    <line x1="1171.4" y1="600.4" x2="1164.5" y2="594.5" stroke="#22aa22" stroke-width="1.6"/>
    <ellipse cx="1167" cy="596.5" rx="2.3" ry="1.3" fill="#22aa22" transform="rotate(35 1167 596.5)"/>
  </g>
  <g stroke="#111" stroke-width="0.9" fill="none">
    <path d="M1172.5,575 H1177 L1172.5,580.5 H1177.5"/>
    <path d="M1189,590.5 L1194,596.5 M1194,590.5 L1189,596.5"/>
    <path d="M1167,589.5 L1169.5,592.5 M1171.5,589.5 L1168,595.5"/>
  </g>
</svg>


<!-- MDI tab -->
<div class="a" style="left:199px;top:628px;width:206px;height:30px;border:1px solid #c6c3bf;border-top-color:#d0cdc9;border-radius:0 0 4px 4px;background:linear-gradient(#f7f7f6,#f9f9f9);box-sizing:border-box"></div>
<svg class="a" style="left:205px;top:635px" width="16" height="16">
  <defs><linearGradient id="gF" x1="0" y1="0" x2="1" y2="1"><stop offset="0" stop-color="#ff4a10"/><stop offset="1" stop-color="#e01000"/></linearGradient>
  <radialGradient id="gG" cx="0.35" cy="0.35"><stop offset="0" stop-color="#3a70e0"/><stop offset="1" stop-color="#0a2a90"/></radialGradient></defs>
  <path d="M1.2,1.3 H8.3 V4.6 H4.4 V6.2 H7.5 V9.2 H4.4 V12.7 H1.2 Z" fill="url(#gF)"/>
  <path d="M9.40,3.50 L10.41,3.60 L10.78,5.37 L11.40,5.71 L13.08,5.02 L13.72,5.81 L12.73,7.32 L12.93,8.00 L14.60,8.70 L14.50,9.71 L12.73,10.08 L12.39,10.70 L13.08,12.38 L12.29,13.02 L10.78,12.03 L10.10,12.23 L9.40,13.90 L8.39,13.80 L8.02,12.03 L7.40,11.69 L5.72,12.38 L5.08,11.59 L6.07,10.08 L5.87,9.40 L4.20,8.70 L4.30,7.69 L6.07,7.32 L6.41,6.70 L5.72,5.02 L6.51,4.38 L8.02,5.37 L8.70,5.17Z" fill="url(#gG)"/>
  <circle cx="9.40" cy="8.70" r="1.5" fill="#f4f4f4"/>
</svg>
<div class="t" style="left:227px;top:636px;letter-spacing:0.28px">T03-ejemplo-1-cubos : 1</div>
<svg class="a" style="left:382px;top:637px" width="13" height="13"><path d="M2.5,2.5 L10,10 M10,2.5 L2.5,10" stroke="#626262" stroke-width="3.2" stroke-linecap="round"/></svg>
<!-- status bar -->
<div class="a" style="left:0;top:658px;width:1199px;height:1px;background:#dcdad7"></div>
<div class="t" style="left:6px;top:664px;letter-spacing:0.8px">Valid</div>
<div class="t" style="left:1088px;top:664px;letter-spacing:0.22px">78.65 x 43.57 mm</div>
<div class="a" id="rb"></div>
</body></html>
